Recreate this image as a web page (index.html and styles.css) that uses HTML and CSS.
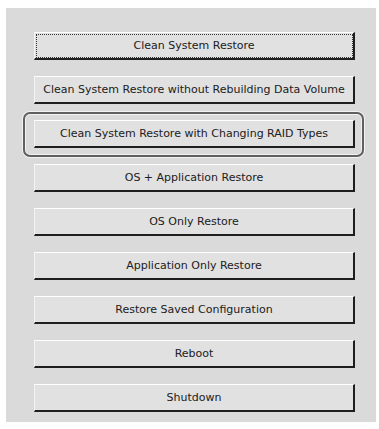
FILE: index.html
```html
<!DOCTYPE html>
<html lang="en">

<head>
    <meta charset="UTF-8">
    <meta name="viewport" content="width=device-width, initial-scale=1.0">
    <title>Restore Menu</title>
    <link rel="stylesheet" href="styles.css">
</head>

<body>
    <div class="panel">
        <button class="btn focused">Clean System Restore</button>
        <button class="btn">Clean System Restore without Rebuilding Data Volume</button>

        <!-- nút đang được chọn -->
        <div class="frame">
            <button class="btn">Clean System Restore with Changing RAID Types</button>
        </div>

        <button class="btn">OS + Application Restore</button>
        <button class="btn">OS Only Restore</button>
        <button class="btn">Application Only Restore</button>
        <button class="btn">Restore Saved Configuration</button>
        <button class="btn">Reboot</button>
        <button class="btn">Shutdown</button>
    </div>
</body>

</html>
```

FILE: styles.css
```css
body {
    margin: 0;
    background-color: #ffffff;
    font-family: "DejaVu Sans", sans-serif;
}

.panel {
    margin: 8px 3px 0 6px;
    height: 414px;
    padding: 24px 21px 0 28px;
    box-sizing: border-box;
    background-color: #dadada;
    display: flex;
    flex-direction: column;
    gap: 16px;
}

.btn {
    width: 321px;
    height: 28px;
    margin: 0;
    padding: 0;
    box-sizing: border-box;
    background-color: #e1e1e1;
    border-top: 1px solid #ffffff;
    border-left: 1px solid #f4f4f4;
    border-right: 2px solid #1e1e1e;
    border-bottom: 2px solid #1e1e1e;
    font-family: "DejaVu Sans", sans-serif;
    font-size: 11px;
    letter-spacing: 0;
    color: #202020;
    text-align: center;
    white-space: nowrap;
}

/* nút có focus: viền chấm */
.focused {
    outline: 1px dotted #333333;
    outline-offset: -3px;
}

/* khung bo tròn quanh nút được chọn */
.frame {
    margin: -8px -9px -9px -11px;
    padding: 6px 7px 7px 9px;
    border: 2px solid #606060;
    border-radius: 7px;
    box-shadow: 0 0 0 1px #f2f2f2, inset 0 0 0 1px #f2f2f2;
    align-self: flex-start;
}
```
